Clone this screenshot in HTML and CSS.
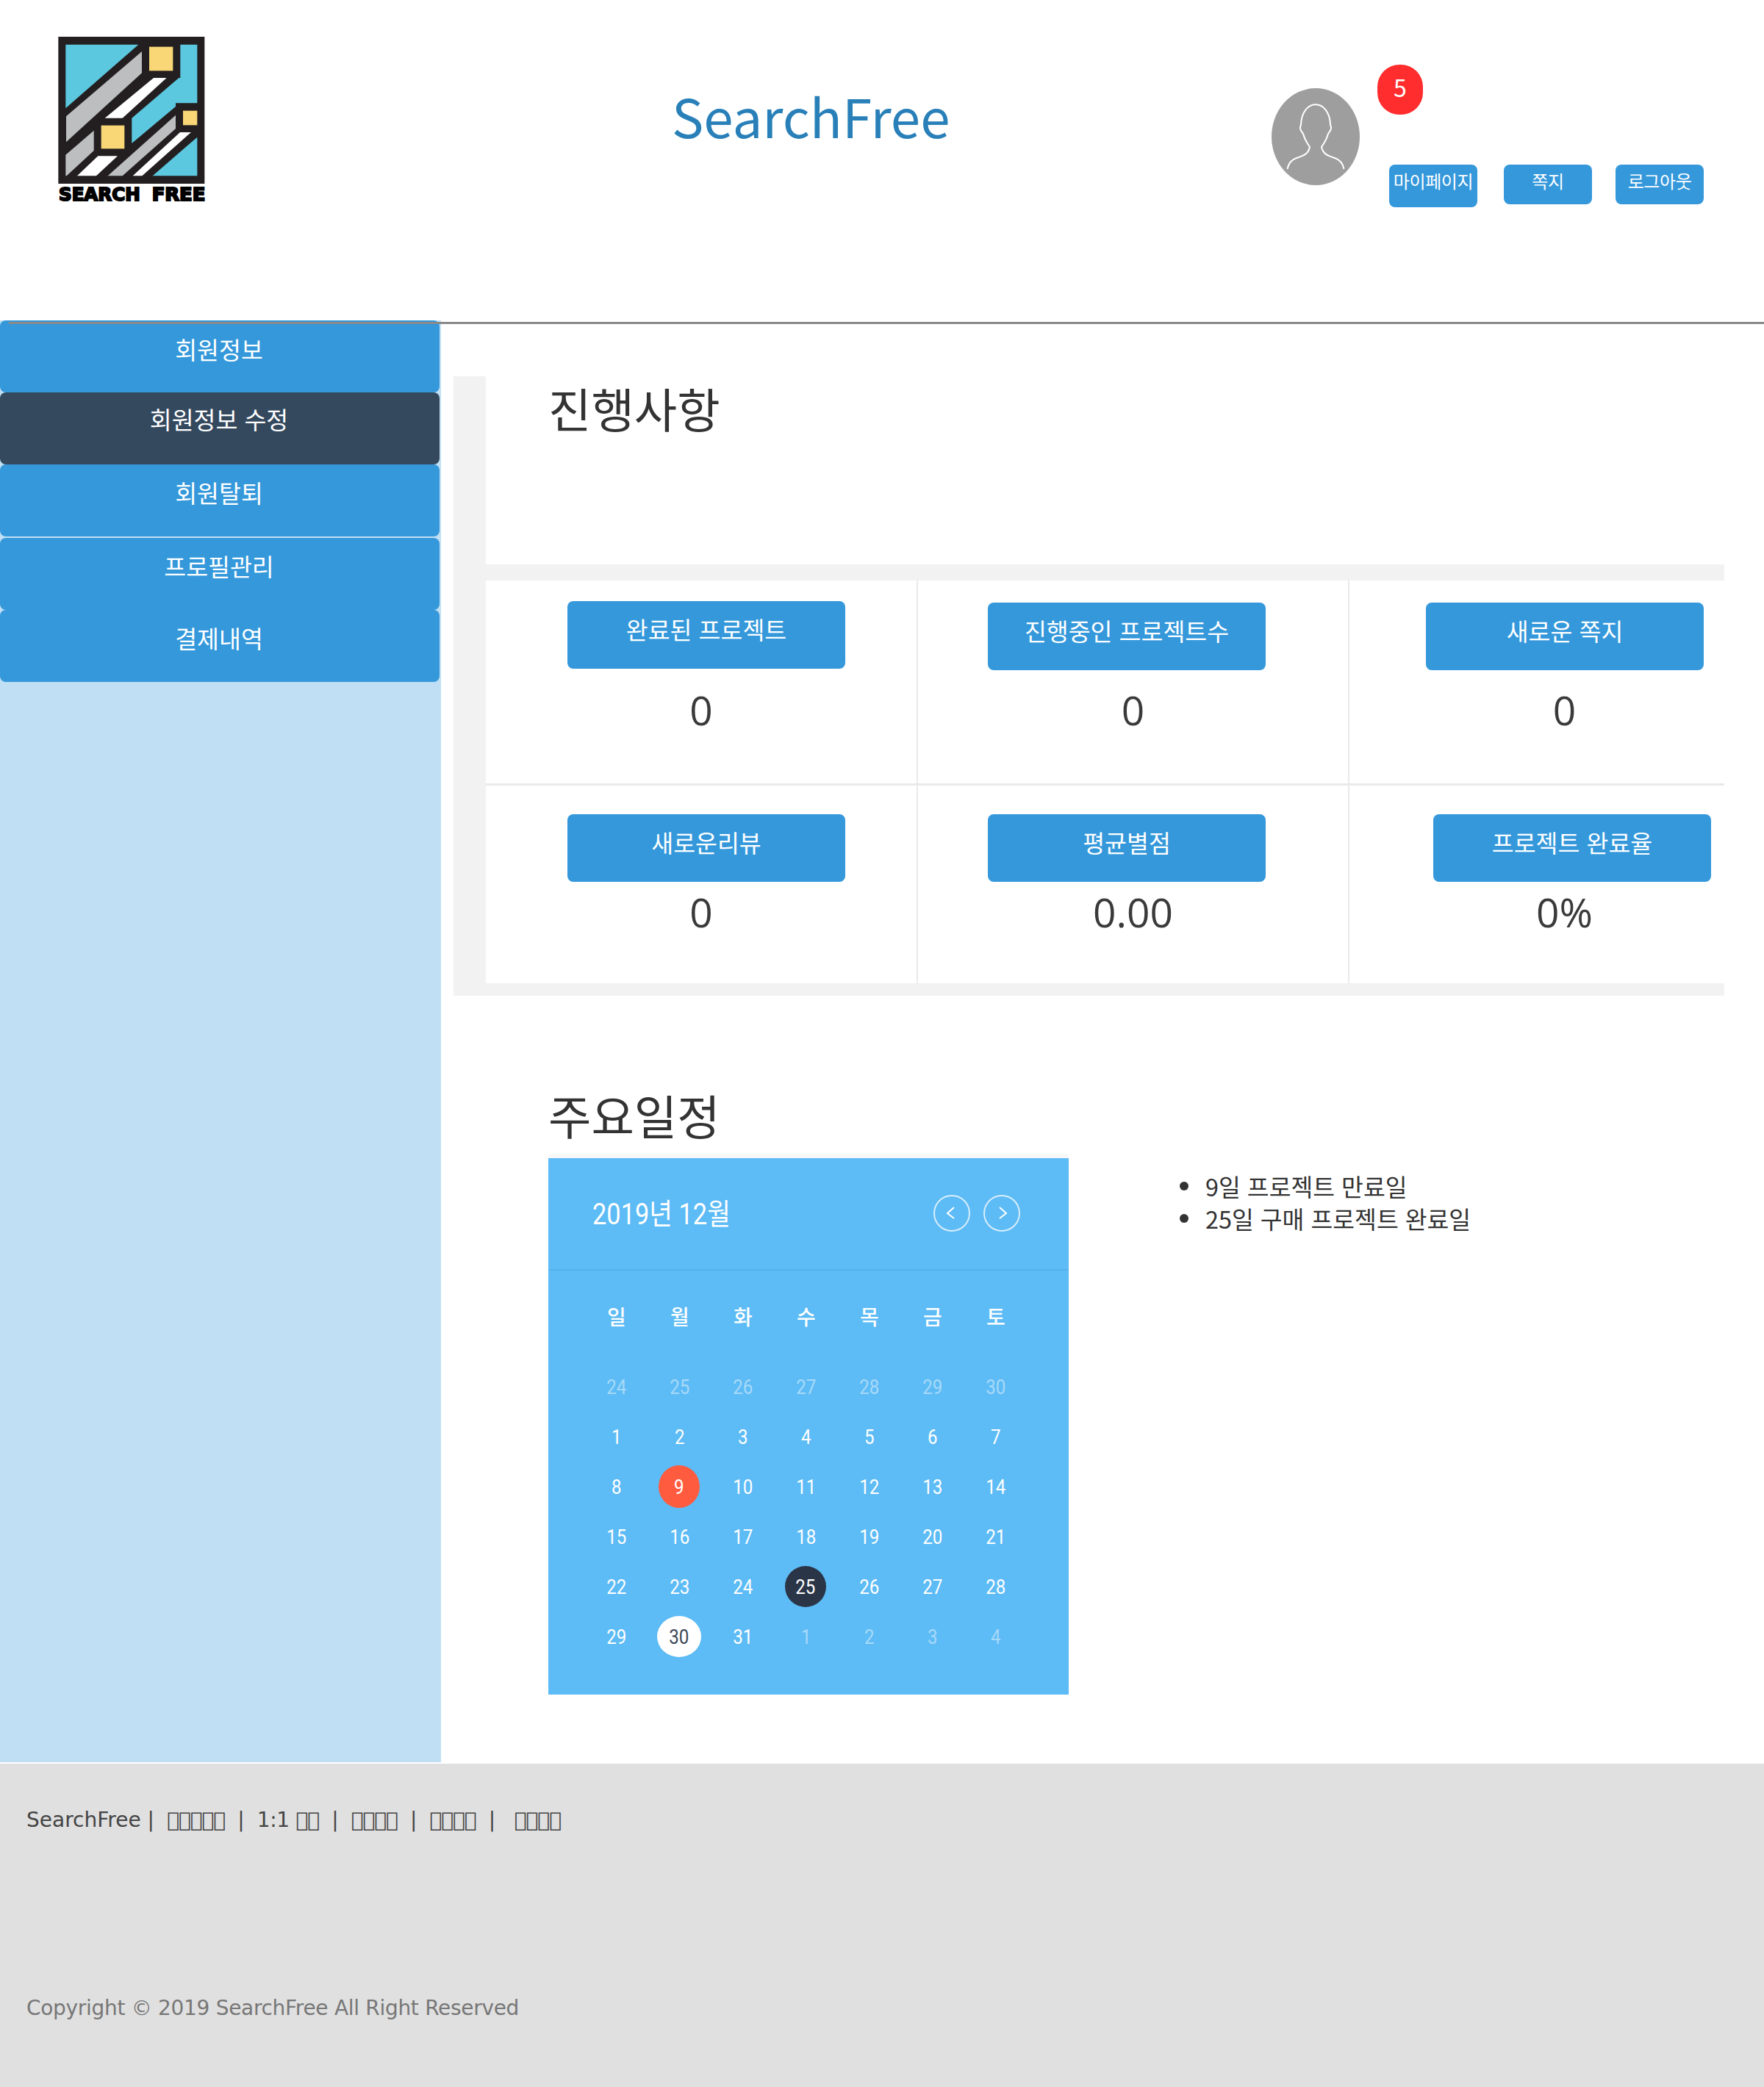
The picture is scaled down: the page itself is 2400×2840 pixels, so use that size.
FILE: index.html
```html
<!DOCTYPE html>
<html lang="ko">
<head>
<meta charset="utf-8">
<title>SearchFree</title>
<link rel="stylesheet" href="styles.css">
</head>
<body>
<header class="header">
  <svg class="logo" viewBox="0 0 750 780" aria-label="Search Free">
    <rect x="88" y="60" width="597" height="600" fill="#231f20"/>
    <polygon points="118,92 415,92 118,352" fill="#5bc8e0"/>
    <polygon points="586,92 655,92 655,331 567,331 567,345 388,495 388,392 580,228 586,228" fill="#5bc8e0"/>
    <polygon points="655,470 655,628 473,628" fill="#5bc8e0"/>
    <polygon points="120,385 429,120 429,208 120,490" fill="#bcbec0"/>
    <polygon points="233,443 233,525 122,628 118,628 118,542" fill="#bcbec0"/>
    <polygon points="567,380 567,435 350,628 290,628" fill="#bcbec0"/>
    <polygon points="477,228 530,228 350,392 278,392" fill="#fff"/>
    <polygon points="250,547 330,547 243,628 165,628" fill="#fff"/>
    <polygon points="585,450 630,450 430,628 392,628" fill="#fff"/>
    <rect x="459" y="101" width="97" height="98" fill="#f9d776"/>
    <rect x="263" y="422" width="95" height="95" fill="#f9d776"/>
    <rect x="597" y="362" width="58" height="59" fill="#f9d776"/>
    <text class="logo-text" x="90" y="729" textLength="332" lengthAdjust="spacingAndGlyphs">SEARCH</text>
    <text class="logo-text" x="470" y="729" textLength="218" lengthAdjust="spacingAndGlyphs">FREE</text>
  </svg>
  <h1 class="brand">SearchFree</h1>
  <svg class="avatar" viewBox="0 0 120 132" aria-label="프로필">
    <ellipse cx="60" cy="66" rx="60" ry="66" fill="#9e9e9e"/>
    <path d="M21.5 110C23 102 28 97 34 95C43 92 50 90 52 80C48 74 45 70 43 62C40 58 37.5 55 40 50C40.500 32 50 22.300 60 22.300C70 22.300 79.500 32 80 50C82.500 55 80 58 77 62C75 70 72 74 68 80C70 90 77 92 86 95C92 97 97 102 98.500 110" fill="none" stroke="#fff" stroke-width="2"/>
  </svg>
  <div class="user">
    <span class="badge">5</span>
    <nav class="user-nav">
      <a class="btn user-btn user-btn-tall">마이페이지</a>
      <a class="btn user-btn user-btn-mid">쪽지</a>
      <a class="btn user-btn">로그아웃</a>
    </nav>
  </div>
</header>
<div class="rule"></div>
<div class="content">
  <aside class="sidebar">
    <a class="side-item side-first">회원정보</a>
    <a class="side-item side-active">회원정보 수정</a>
    <a class="side-item">회원탈퇴</a>
    <a class="side-item side-gap">프로필관리</a>
    <a class="side-item">결제내역</a>
  </aside>
  <main class="main">
    <section class="panel">
      <div class="panel-title"><h2 class="heading">진행사항</h2></div>
      <div class="stats-clip">
        <div class="stats">
          <div class="cell c1 r1"><a class="btn stat-btn">완료된 프로젝트</a><p class="num n1">0</p></div>
          <div class="cell c2 r1"><a class="btn stat-btn">진행중인 프로젝트수</a><p class="num n2">0</p></div>
          <div class="cell c3 r1"><a class="btn stat-btn">새로운 쪽지</a><p class="num n2">0</p></div>
          <div class="cell c1 r2"><a class="btn stat-btn">새로운리뷰</a><p class="num n3">0</p></div>
          <div class="cell c2 r2"><a class="btn stat-btn">평균별점</a><p class="num n3">0.00</p></div>
          <div class="cell c4 r2"><a class="btn stat-btn">프로젝트 완료율</a><p class="num n3">0%</p></div>
        </div>
      </div>
    </section>
    <section class="schedule">
      <h2 class="heading">주요일정</h2>
      <div class="schedule-row">
        <div class="calendar">
          <div class="cal-head">
            <span class="cal-title">2019년 12월</span>
            <svg class="cal-arrow" viewBox="0 0 50 50"><ellipse cx="25" cy="25" rx="24" ry="24" fill="none" stroke="#d7eefc" stroke-width="2"/><path d="M28 17L19 25L28 32" fill="none" stroke="#fff" stroke-width="2"/></svg>
            <svg class="cal-arrow" viewBox="0 0 50 50"><ellipse cx="25" cy="25" rx="24" ry="24" fill="none" stroke="#d7eefc" stroke-width="2"/><path d="M22 17L31 25L22 32" fill="none" stroke="#fff" stroke-width="2"/></svg>
          </div>
          <div class="cal-grid cal-week">
            <span>일</span><span>월</span><span>화</span><span>수</span><span>목</span><span>금</span><span>토</span>
          </div>
          <div class="cal-grid cal-days">
            <span class="off"><b>24</b></span><span class="off"><b>25</b></span><span class="off"><b>26</b></span><span class="off"><b>27</b></span><span class="off"><b>28</b></span><span class="off"><b>29</b></span><span class="off"><b>30</b></span>
            <span><b>1</b></span><span><b>2</b></span><span><b>3</b></span><span><b>4</b></span><span><b>5</b></span><span><b>6</b></span><span><b>7</b></span>
            <span><b>8</b></span><span class="mark mark-red"><b>9</b></span><span><b>10</b></span><span><b>11</b></span><span><b>12</b></span><span><b>13</b></span><span><b>14</b></span>
            <span><b>15</b></span><span><b>16</b></span><span><b>17</b></span><span><b>18</b></span><span><b>19</b></span><span><b>20</b></span><span><b>21</b></span>
            <span><b>22</b></span><span><b>23</b></span><span><b>24</b></span><span class="mark mark-dark"><b>25</b></span><span><b>26</b></span><span><b>27</b></span><span><b>28</b></span>
            <span><b>29</b></span><span class="mark mark-white"><b>30</b></span><span><b>31</b></span><span class="off"><b>1</b></span><span class="off"><b>2</b></span><span class="off"><b>3</b></span><span class="off"><b>4</b></span>
          </div>
        </div>
        <ul class="events">
          <li>9일 프로젝트 만료일</li>
          <li>25일 구매 프로젝트 완료일</li>
        </ul>
      </div>
    </section>
  </main>
</div>
<footer class="footer">
  <p class="foot-links"><span class="foot-name">SearchFree |</span>&nbsp; <span class="tofu">&#xE000;&#xE000;&#xE000;&#xE000;&#xE000;</span> &nbsp;|&nbsp; 1:1 <span class="tofu">&#xE000;&#xE000;</span> &nbsp;|&nbsp; <span class="tofu">&#xE000;&#xE000;&#xE000;&#xE000;</span> &nbsp;|&nbsp; <span class="tofu">&#xE000;&#xE000;&#xE000;&#xE000;</span> &nbsp;|&nbsp; &nbsp;<span class="tofu">&#xE000;&#xE000;&#xE000;&#xE000;</span></p>
  <p class="foot-copy">Copyright © 2019 SearchFree All Right Reserved</p>
</footer>
</body>
</html>
```
FILE: styles.css
```css
* { box-sizing: border-box; }
html, body { margin: 0; padding: 0; }
body {
  position: relative;
  width: 2400px;
  height: 2840px;
  overflow: hidden;
  background: #fff;
  color: #333;
  font-family: "Noto Sans CJK KR", "Noto Sans", sans-serif;
  font-size: 32px;
}
h1, h2, p, ul { margin: 0; padding: 0; }

.btn {
  display: block;
  background: #3498db;
  color: #fff;
  text-align: center;
  border-radius: 8px;
}

/* header */
.header { display: flex; align-items: flex-start; height: 436px; }
.logo { width: 250px; height: 260px; margin: 30px 0 0 50px; flex: none; }
.logo-text {
  font-family: "DejaVu Sans", sans-serif;
  font-weight: 700;
  font-size: 72px;
  fill: #000;
  stroke: #000;
  stroke-width: 6px;
}
.brand {
  width: 816px;
  margin: 107px 0 0 614px;
  flex: none;
  color: #2980b9;
  font-size: 72.700px;
  font-weight: 400;
  line-height: 100px;
  white-space: nowrap;
}
.avatar { width: 120px; height: 132px; margin-top: 120px; flex: none; }
.user { margin: 88px 0 0 24px; }
.badge {
  display: block;
  width: 62px;
  height: 68px;
  border-radius: 30px;
  background: #ff2d2d;
  color: #fff;
  text-align: center;
  font-size: 32px;
  line-height: 60px;
}
.user-nav { display: flex; align-items: flex-start; margin: 68px 0 0 16px; }
.user-btn {
  width: 120px;
  height: 54px;
  font-size: 24px;
  line-height: 44px;
  letter-spacing: -0.4px;
  white-space: nowrap;
}
.user-btn-tall { height: 58px; }
.user-btn-mid { margin: 0 32px 0 36px; }

.rule {
  position: absolute;
  top: 438px;
  left: 12px;
  right: 0;
  height: 3px;
  background: #8a8a8a;
}

/* sidebar */
.content { display: flex; height: 1964px; }
.sidebar { width: 600px; height: 1962px; flex: none; background: #c0dff4; }
.side-item {
  display: block;
  width: 598px;
  height: 98px;
  padding: 15px 2px 0 0;
  background: #3498db;
  color: #fff;
  border-radius: 8px;
  text-align: center;
  font-size: 32.500px;
  line-height: 46px;
}
.side-first { padding-top: 16px; }
.side-active { background: #34495e; padding-top: 13px; }
.side-gap { margin-top: 2px; }

/* main */
.main { flex: 1; padding: 76px 54px 0 17px; }
.panel {
  width: 1729px;
  height: 843px;
  padding-left: 44px;
  background: #f2f2f2;
}
.panel-title { height: 256px; background: #fff; padding: 0 0 0 85px; }
.heading { font-size: 63.500px; font-weight: 400; line-height: 84px; color: #333; }
.stats-clip { margin-top: 22px; overflow: hidden; }
.stats {
  display: grid;
  width: 1760px;
  grid-template-columns: 586px 587px 587px;
  grid-template-rows: 276px 272px;
}
.cell { background: #fff; }
.c2, .c3, .c4 { border-left: 2px solid #eaeaea; }
.r2 { border-top: 3px solid #eaeaea; }
.stat-btn {
  width: 378px;
  height: 92px;
  padding-top: 15px;
  font-size: 32.500px;
  line-height: 46px;
  white-space: nowrap;
}
.c1 .stat-btn { margin-left: 111px; }
.c2 .stat-btn { margin-left: 95px; }
.c3 .stat-btn { margin-left: 104px; }
.c4 .stat-btn { margin-left: 114px; }
.r1.c1 { padding-top: 28px; }
.r1.c2, .r1.c3 { padding-top: 30px; }
.r2 { padding-top: 39px; }
.num {
  text-align: center;
  font-family: "Open Sans", sans-serif;
  font-size: 55px;
  line-height: 80px;
  color: #3a3a3a;
}
.n1 { margin-top: 16px; }
.n2 { margin-top: 14px; }
.n3 { margin-top: 1px; }

/* schedule */
.schedule { padding: 119px 0 0 129px; }
.schedule-row { display: flex; align-items: flex-start; margin-top: 12px; }
.calendar {
  width: 708px;
  border-top: 6px solid #f8f8f8;
  background: #5dbbf5;
  background-clip: padding-box;
  padding-bottom: 45px;
  color: #fff;
}
.cal-head {
  display: flex;
  align-items: center;
  gap: 18px;
  height: 153px;
  padding: 0 66px 2px 60px;
  border-bottom: 2px solid #55b1ea;
}
.cal-title {
  flex: 1;
  padding-top: 5px;
  font-family: Roboto, "Noto Sans CJK KR", sans-serif;
  font-size: 40px;
  line-height: 50px;
  white-space: nowrap;
  transform: scaleX(0.86);
  transform-origin: left center;
}
.cal-arrow { width: 50px; height: 50px; flex: none; }
.cal-grid {
  display: grid;
  grid-template-columns: repeat(7, 86px);
  grid-auto-rows: 68px;
  margin-left: 50px;
  text-align: center;
  justify-items: center;
  align-items: center;
}
.cal-week { margin-top: 28px; font-size: 28px; font-weight: 500; }
.cal-days { margin-top: 28px; font-family: Roboto, sans-serif; font-size: 28px; }
.cal-days span { display: flex; align-items: center; justify-content: center; }
.cal-days b { font-weight: 400; display: block; transform: scaleX(0.86); }
.off { opacity: 0.45; }
.mark { border-radius: 50%; }
.mark-red { width: 56px; height: 58px; background: #ff5c3f; margin-right: 2px; }
.mark-dark { width: 56px; height: 56px; background: #2a3547; margin-right: 2px; }
.mark-white { width: 60px; height: 56px; background: #fff; color: #3c4858; margin-right: 2px; }

.events {
  margin: 22px 0 0 186px;
  list-style: none;
  font-size: 32.400px;
  line-height: 44px;
  color: #333;
}
.events li { position: relative; }
.events li::before {
  content: "";
  position: absolute;
  left: -35px;
  top: 16px;
  width: 12px;
  height: 12px;
  border-radius: 50%;
  background: #333;
}

/* footer */
.footer {
  height: 440px;
  padding: 57px 0 0 36px;
  background: #e0e0e0;
  font-family: "DejaVu Sans", sans-serif;
  font-size: 28px;
  line-height: 40px;
  letter-spacing: -0.3px;
}
.foot-links { color: #444; white-space: pre; }
.foot-name { letter-spacing: 0; }
.tofu { letter-spacing: -1px; }
.foot-copy { margin-top: 216px; color: #777; }
```
